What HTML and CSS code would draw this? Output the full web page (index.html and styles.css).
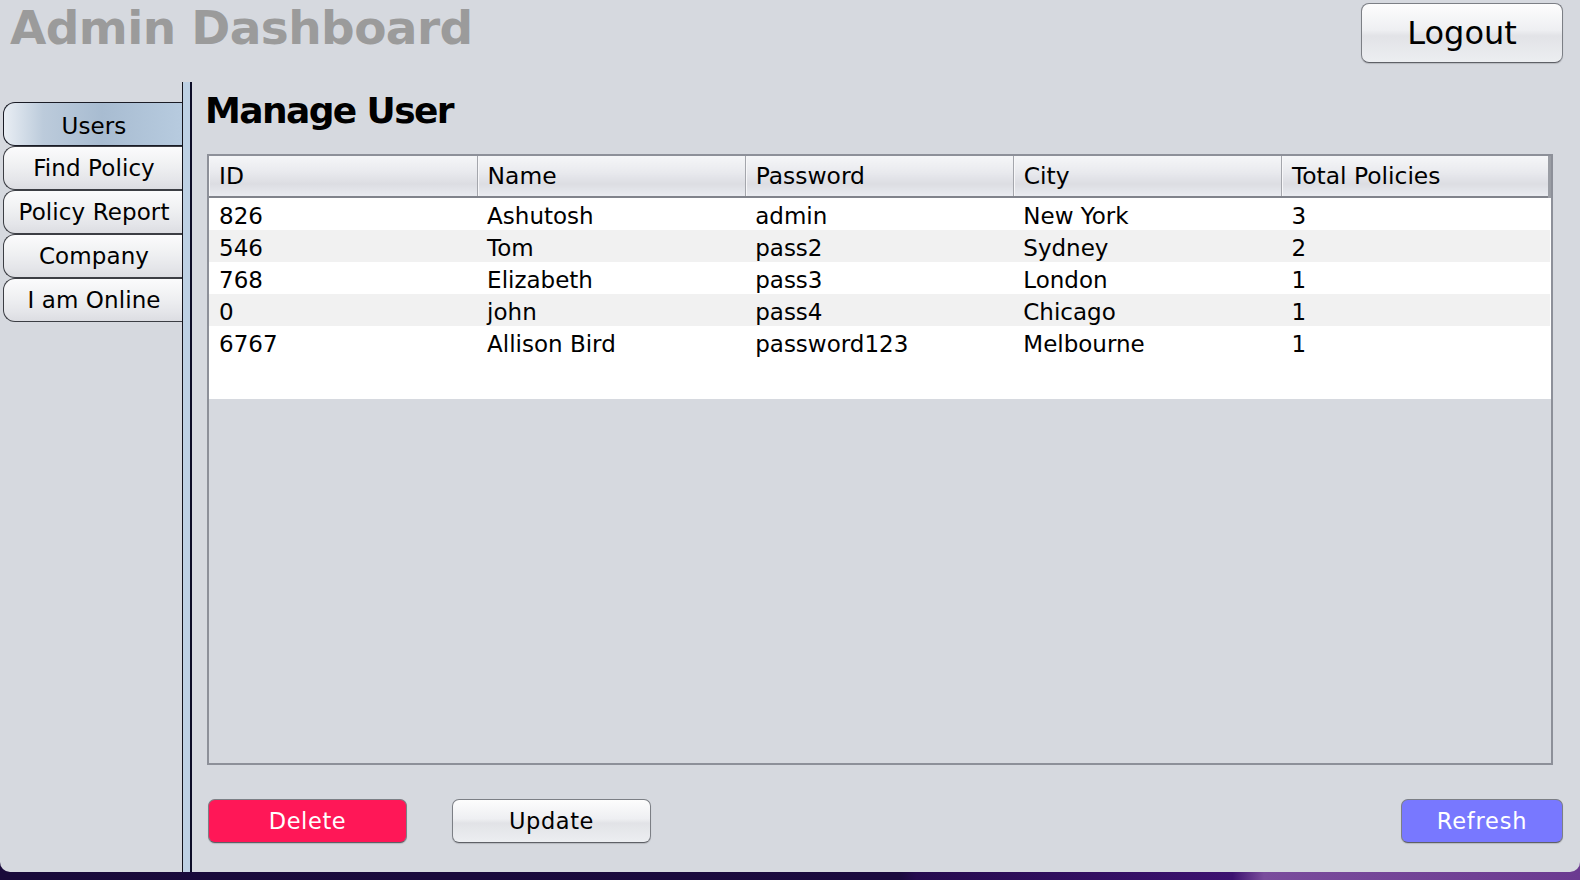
FILE: index.html
```html
<!DOCTYPE html>
<html lang="en">
<head>
<meta charset="utf-8">
<title>Admin Dashboard</title>
<link rel="stylesheet" href="styles.css">
</head>
<body>
<div class="window">
  <header class="topbar">
    <h1 class="app-title">Admin Dashboard</h1>
    <button class="btn btn-logout">Logout</button>
  </header>
  <div class="main">
    <nav class="tabs">
      <div class="tab active">Users</div>
      <div class="tab">Find Policy</div>
      <div class="tab">Policy Report</div>
      <div class="tab">Company</div>
      <div class="tab">I am Online</div>
    </nav>
    <div class="divider"></div>
    <section class="content">
      <h2 class="page-title">Manage User</h2>
      <div class="table-pane">
        <div class="table-view">
          <table class="grid">
            <thead>
              <tr><th>ID</th><th>Name</th><th>Password</th><th>City</th><th>Total Policies</th></tr>
            </thead>
            <tbody>
              <tr><td>826</td><td>Ashutosh</td><td>admin</td><td>New York</td><td>3</td></tr>
              <tr><td>546</td><td>Tom</td><td>pass2</td><td>Sydney</td><td>2</td></tr>
              <tr><td>768</td><td>Elizabeth</td><td>pass3</td><td>London</td><td>1</td></tr>
              <tr><td>0</td><td>john</td><td>pass4</td><td>Chicago</td><td>1</td></tr>
              <tr><td>6767</td><td>Allison Bird</td><td>password123</td><td>Melbourne</td><td>1</td></tr>
            </tbody>
          </table>
        </div>
      </div>
      <div class="actions">
        <button class="btn btn-delete">Delete</button>
        <button class="btn btn-update">Update</button>
        <span class="spacer"></span>
        <button class="btn btn-refresh">Refresh</button>
      </div>
    </section>
  </div>
</div>
</body>
</html>
```
FILE: styles.css
```css
* { box-sizing: border-box; }
html, body { margin: 0; padding: 0; }
body {
  width: 1580px;
  height: 880px;
  overflow: hidden;
  background: linear-gradient(90deg, #190a3a 0%, #1b0a3e 57%, #260b4e 58%, #3d1270 78%, #7a4c9c 80%, #6b3a90 100%);
  font-family: "DejaVu Sans", "Liberation Sans", sans-serif;
  color: #000;
}
.window {
  height: 872px;
  background: #d6d9df;
  border-radius: 0 0 10px 10px;
  display: flex;
  flex-direction: column;
  overflow: hidden;
}
.topbar {
  height: 82px;
  flex: none;
  display: flex;
  justify-content: space-between;
  align-items: flex-start;
  padding: 0 17px 0 10px;
}
.app-title {
  margin: 0;
  font: bold 47px/56px "DejaVu Sans", sans-serif;
  letter-spacing: -0.6px;
  color: #9b9b9b;
}
.btn {
  font-family: "DejaVu Sans", sans-serif;
  font-size: 22.5px;
  height: 44px;
  border-radius: 7px;
  border: 1.5px solid #7c7f85;
  border-bottom-color: #5e6066;
  padding: 0;
  cursor: default;
  color: #000;
  background: linear-gradient(#fdfdfd 0%, #eeeff2 45%, #e2e3e7 55%, #eceef1 100%);
  box-shadow: 0 1px 1px rgba(0,0,0,0.15);
}
.btn-logout {
  margin-top: 3px;
  width: 202px;
  height: 60px;
  font-size: 32px;
  border-radius: 8px;
}
.main {
  flex: 1;
  display: flex;
  min-height: 0;
}
.tabs {
  width: 182px;
  flex: none;
  padding: 20px 0 0 3px;
  display: flex;
  flex-direction: column;
}
.tab {
  height: 44px;
  border: 1.5px solid #3c3e44;
  border-right: none;
  border-radius: 12px 0 0 12px;
  background: linear-gradient(#fbfbfc 0%, #eff0f2 45%, #e4e5e9 80%, #dcdde2 100%);
  font-size: 23px;
  line-height: 40px;
  padding-top: 1px;
  text-align: center;
  padding-left: 2px;
  letter-spacing: 0.1px;
}
.tab.active {
  background: linear-gradient(90deg, #e9eef4 0%, #bccbdb 22%, #a8bcd1 55%, #b7cbdf 100%);
  border-color: #1a1c26;
  padding-top: 3px;
}
.divider {
  width: 10px;
  flex: none;
  background: #bed1e4;
  border-left: 1px solid #14141c;
  border-right: 2px solid #0d0d28;
}
.content {
  flex: 1;
  display: flex;
  flex-direction: column;
  padding: 0 17px 29px 0;
}
.page-title {
  margin: 7px 0 0 13px;
  font: bold 36px/44px "DejaVu Sans", sans-serif;
  letter-spacing: -1.6px;
}
.table-pane {
  margin: 21px 10px 0 15px;
  height: 611px;
  border: 2px solid #8d9099;
  background: #d6d9df;
}
.table-view {
  background: #fff;
  padding-bottom: 41px;
}
.grid {
  width: 100%;
  table-layout: fixed;
  border-collapse: collapse;
}
.grid th {
  height: 41px;
  padding: 0 10px;
  font-weight: normal;
  font-size: 23.4px;
  line-height: 39px;
  text-align: left;
  background: linear-gradient(#f5f6f8 0%, #e9eaee 40%, #dcdde2 70%, #e9ebf0 100%);
  border-bottom: 2px solid #80838b;
  border-right: 1px solid #a4a6ac;
  box-shadow: inset 1px 0 0 #f7f7f9;
}
.grid th:last-child {
  border-right: 3px solid #9a9da4;
}
.grid tr { height: 32px; }
.grid td {
  padding: 5px 10px 0;
  font-size: 23px;
  line-height: 27px;
  white-space: nowrap;
  vertical-align: top;
}
.grid tbody tr:nth-child(even) td { background: #f1f1f1; }
.actions {
  margin-top: 34px;
  padding-left: 16px;
  display: flex;
  align-items: center;
}
.spacer { flex: 1; }
.btn-delete {
  width: 199px;
  background: #ff1757;
  color: #fff;
  letter-spacing: 0.6px;
}
.btn-update {
  width: 199px;
  margin-left: 45px;
  letter-spacing: 0.6px;
}
.btn-refresh {
  width: 162px;
  background: #7878ff;
  color: #fff;
  letter-spacing: 0.8px;
}
```
